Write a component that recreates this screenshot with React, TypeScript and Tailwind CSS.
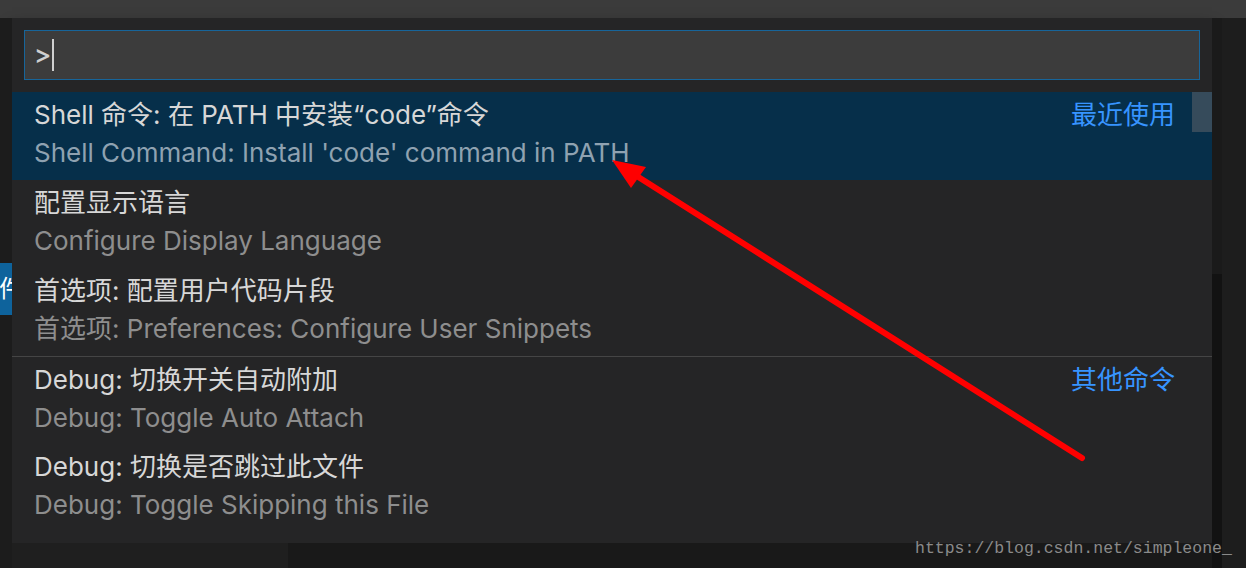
const rows = [
  {
    title: "Shell 命令: 在 PATH 中安装“code”命令",
    sub: "Shell Command: Install 'code' command in PATH",
    tag: "最近使用",
    selected: true,
  },
  { title: "配置显示语言", sub: "Configure Display Language" },
  { title: "首选项: 配置用户代码片段", sub: "首选项: Preferences: Configure User Snippets" },
  {
    title: "Debug: 切换开关自动附加",
    sub: "Debug: Toggle Auto Attach",
    tag: "其他命令",
    separator: true,
  },
  { title: "Debug: 切换是否跳过此文件", sub: "Debug: Toggle Skipping this File" },
];

type Row = (typeof rows)[number] & { separator?: boolean; selected?: boolean; tag?: string };

function Item({ row }: { row: Row }) {
  return (
    <div
      className={
        "relative flex h-[88px] items-start pl-[22px] pr-[37px] pt-[4px] " +
        (row.selected ? "bg-[#062f4a]" : "") +
        (row.separator ? " border-t border-[#454545]" : "")
      }
    >
      <div className="flex flex-1 flex-col">
        <span className="h-[38px] leading-[38px] text-[#d7d7d7]">{row.title}</span>
        <span
          className={
            "h-[38px] leading-[38px] " + (row.selected ? "text-[#8fa2b1]" : "text-[#8e8e8e]")
          }
        >
          {row.sub}
        </span>
      </div>
      {row.tag && <span className="h-[38px] leading-[38px] text-[#3794ff]">{row.tag}</span>}
      {row.selected && (
        <div className="absolute right-0 top-0 h-[40px] w-[20px] bg-[#364b5b]" />
      )}
    </div>
  );
}

export default function App() {
  return (
    <div
      className="relative flex h-[568px] w-[1246px] flex-col overflow-hidden bg-[#1e1e1e] text-[26px]"
      style={{ fontFamily: 'Inter, "Noto Sans CJK SC", sans-serif' }}
    >
      <div className="h-[18px] bg-[#3b3b3b]" />
      <div className="flex flex-1">
        {/* left gutter with a clipped editor tab behind the palette */}
        <div className="relative w-[12px] bg-[#1c1c1c]">
          <div className="absolute left-0 top-[245px] h-[52px] w-[12px] overflow-hidden bg-[#0e639c]">
            <span className="absolute -left-[1px] top-[14px] text-[24px] leading-none text-white">
              件
            </span>
          </div>
        </div>

        <div className="flex w-[1200px] flex-col">
          <div className="h-[525px] bg-[#252526] shadow-[0_10px_14px_rgba(0,0,0,0.85)]">
            <div className="px-[12px] pb-[12px] pt-[12px]">
              <div className="flex h-[50px] items-center border border-[#17659a] bg-[#3c3c3c] pl-[9px]">
                <span className="text-[26px] font-medium leading-none text-[#cfcfcf]">&gt;</span>
                <span className="ml-[1px] h-[32px] w-[1.5px] bg-[#d0d0d0]" />
              </div>
            </div>
            {rows.map((r) => (
              <Item key={r.title} row={r as Row} />
            ))}
          </div>
          <div className="flex flex-1">
            <div className="w-[276px] bg-[#1f1f1f]" />
            <div className="flex-1 bg-[#191919]" />
          </div>
        </div>

        <div className="flex flex-1">
          <div className="flex w-[10px] flex-col bg-[#1a1a1a]">
            <div className="mt-[256px] flex-1 bg-[#121212]" />
          </div>
          <div className="flex-1 bg-[#1d1d1d]" />
        </div>
      </div>

      {/* annotation arrow */}
      <svg className="pointer-events-none absolute inset-0" width="1246" height="568">
        <line
          x1="1082"
          y1="458"
          x2="632"
          y2="173"
          stroke="#ff0000"
          strokeWidth="6"
          strokeLinecap="round"
        />
        <polygon points="612,160 646,167 631,188" fill="#ff0000" />
      </svg>

      <span
        className="absolute left-[915px] top-[537px] text-[16.5px] text-[#8a8a8a]"
        style={{ fontFamily: '"Liberation Mono", monospace' }}
      >
        https://blog.csdn.net/simpleone_
      </span>
    </div>
  );
}
